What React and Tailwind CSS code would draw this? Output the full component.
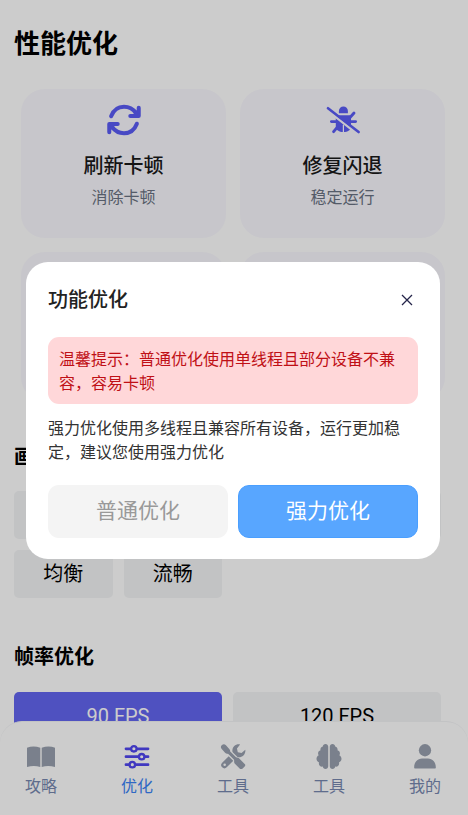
import React from "react";
import { FaBolt, FaBrain, FaGaugeHigh } from "react-icons/fa6";

const FONT = "font-[Roboto,'Noto_Sans_CJK_SC',sans-serif]";

function RefreshIcon({ className }) {
  const half = (
    <>
      <path d="M4 11.4C6.2 5.6 10.600 2.200 16.500 2.200c4.600 0 8.800 2.200 11.600 6" fill="none" />
      <path d="M30.800 3.200v8h-8.200" fill="none" />
      <path d="M30 4 24 11h6z" fill="currentColor" stroke="none" />
    </>
  );
  return (
    <svg
      viewBox="0 0 33 30"
      className={className}
      stroke="currentColor"
      strokeWidth="3.900"
      strokeLinecap="round"
      strokeLinejoin="round"
    >
      {half}
      <g transform="rotate(180 16.5 15)">{half}</g>
    </svg>
  );
}

function BugSlashIcon({ className }) {
  return (
    <svg viewBox="0 0 34 30" className={className} fill="currentColor" stroke="none" strokeLinecap="round">
      <path d="M12.9 8.2V6a4.5 4.5 0 0 1 9 0v2.2z" />
      <path d="M11 10.200h13l1 2.600v9.400c0 2.600-3.200 4.800-7.600 4.800s-7.600-2.200-7.600-4.800v-9.400z" />
      <g stroke="currentColor" strokeWidth="2.900">
        <path d="M24 12.400 28 8M25 16.600h4.600M10 16.600H5.400M11 22.600 7.600 26.600" />
      </g>
      <path d="M17.400 20v7" stroke="#f9f8fe" strokeWidth="1.200" />
      <path d="M1.200 5.200 30.600 28.200" stroke="#f9f8fe" strokeWidth="2.400" />
      <path d="M2 3.200 32.600 27" stroke="currentColor" strokeWidth="2.600" />
    </svg>
  );
}

function BookIcon({ className }) {
  return (
    <svg viewBox="0 0 28 24" className={className} fill="currentColor">
      <path d="M0 3.200C4 1.600 9 1.600 13.300 3.200v19.400C9 21 4.600 21 0 22.600z" />
      <path d="M14.700 3.200C19 1.600 24 1.600 28 3.200v19.400c-4.600-1.600-9-1.600-13.300 0z" />
    </svg>
  );
}

function SlidersIcon({ className }) {
  return (
    <svg viewBox="0 0 24 24" className={className} stroke="currentColor" strokeWidth="2.600" strokeLinecap="round" fill="white">
      <path d="M1.400 4.600h21.200M1.400 12.200h21.200M1.400 19.800h21.200" />
      <circle cx="9" cy="4.600" r="2.600" strokeWidth="2.200" />
      <circle cx="16.500" cy="12.200" r="2.600" strokeWidth="2.200" />
      <circle cx="7.500" cy="19.800" r="2.600" strokeWidth="2.200" />
    </svg>
  );
}

function ToolsIcon({ className }) {
  return (
    <svg viewBox="0 0 24 24" className={className} fill="none" stroke="currentColor">
      <path d="M13 11 3.800 20.200" strokeWidth="6.200" strokeLinecap="round" />
      <path
        d="M18.800.400c-4-.8-7.800 2.200-7.400 6.800.2 3.400 3 5.800 6.200 5.600 3.800-.2 6.800-3.400 6.200-7.400l-3.600 3.200-3.600-.8-.8-3.600z"
        fill="currentColor"
        stroke="none"
      />
      <path d="M5 5 17 17" stroke="white" strokeWidth="5.400" />
      <path d="M3.200 3 6.400 6.600" strokeWidth="5.400" strokeLinecap="round" />
      <path d="M6.400 6.400 16 16" strokeWidth="3" />
      <path
        d="M13.200 14.800c0-1 .8-1.800 1.800-1.800 1.200 0 2.200.2 3 1l5.200 5.200c.8.8.8 1.600 0 2.400l-2.200 2.200c-.8.8-1.600.8-2.400 0l-5-5.200c-.6-.6-.6-2.600-.4-3.800z"
        fill="currentColor"
        stroke="none"
      />
      <circle cx="4" cy="20" r="1.200" fill="white" stroke="none" />
    </svg>
  );
}

function UserIcon({ className }) {
  return (
    <svg viewBox="0 0 24 24" className={className} fill="currentColor">
      <circle cx="12" cy="6" r="5.900" />
      <path d="M1.600 22.600c0-5 3.200-8.600 7.600-8.600h5.600c4.400 0 7.600 3.600 7.600 8.600 0 .6-.4 1-1 1H2.600c-.6 0-1-.4-1-1z" />
    </svg>
  );
}

const features = [
  { title: "刷新卡顿", note: "消除卡顿", Icon: RefreshIcon },
  { title: "修复闪退", note: "稳定运行", Icon: BugSlashIcon },
  { title: "", note: "", Icon: FaBolt },
  { title: "", note: "", Icon: FaGaugeHigh },
];

const qualities = ["", "", "", "", "均衡", "流畅"];

const tabs = [
  { label: "攻略", Icon: BookIcon },
  { label: "优化", Icon: SlidersIcon, active: true },
  { label: "工具", Icon: ToolsIcon },
  { label: "工具", Icon: FaBrain },
  { label: "我的", Icon: UserIcon },
];

function FeatureCard({ title, note, Icon }) {
  return (
    <button
      type="button"
      className="flex h-[149px] flex-col items-center rounded-[24px] bg-[#f9f8fe] pt-[15px]"
    >
      <Icon className="h-8 w-[34px] text-[#5b5cf6]" />
      <span className="mt-4 text-[20px] leading-7 font-medium text-[#1a1a1a]">{title}</span>
      <span className="mt-[6px] text-base leading-6 text-gray-500">{note}</span>
    </button>
  );
}

function Dialog() {
  return (
    <div className="fixed inset-0 z-20 flex items-center justify-center bg-black/20 pt-1.5 pr-7 pl-[26px]">
      <section
        role="dialog"
        aria-labelledby="dialog-title"
        className="w-full rounded-[22px] bg-white px-[22px] pt-[23px] pb-[21px]"
      >
        <header className="flex items-center justify-between">
          <h2 id="dialog-title" className="text-[20px] leading-[30px] font-medium text-[#222]">
            功能优化
          </h2>
          <button type="button" aria-label="关闭" className="flex size-[22px] items-center justify-center">
            <svg viewBox="0 0 12 12" className="size-3 stroke-[#25254a]" fill="none" strokeWidth="1.3">
              <path d="M1 1 11 11M11 1 1 11" />
            </svg>
          </button>
        </header>
        <p className="mt-[22px] rounded-[11px] bg-[#ffd7d9] px-[11px] pt-[11px] pb-2 text-base leading-6 text-[#c01016]">
          温馨提示：普通优化使用单线程且部分设备不兼容，容易卡顿
        </p>
        <p className="mt-[13px] text-base leading-6 text-[#333]">
          强力优化使用多线程且兼容所有设备，运行更加稳定，建议您使用强力优化
        </p>
        <div className="mt-5 grid grid-cols-2 gap-[10px]">
          <button type="button" className="h-[53px] rounded-[11px] bg-[#f4f4f4] text-[21px] text-[#999]">
            普通优化
          </button>
          <button
            type="button"
            className="h-[53px] rounded-[11px] border border-[#4a9fff] bg-[#58a6ff] text-[21px] text-white"
          >
            强力优化
          </button>
        </div>
      </section>
    </div>
  );
}

export default function App() {
  return (
    <div className={`min-h-screen bg-white text-black ${FONT}`}>
      <main className="pt-6 pr-[27px] pb-16 pl-[14px]">
        <h1 className="text-[26px] leading-10 font-bold">性能优化</h1>
        <div className="mt-[25px] -mr-1 ml-[7px] grid grid-cols-2 gap-[14px]">
          {features.map((f, i) => (
            <FeatureCard key={i} {...f} />
          ))}
        </div>

        <h2 className="mt-[41px] text-[20px] leading-[30px] font-bold">画质优化</h2>
        <div className="mt-[19px] grid grid-cols-4 gap-x-[11px] gap-y-[11px]">
          {qualities.map((q, i) => (
            <button key={i} type="button" className="h-12 rounded-[5px] bg-gray-100 text-[20px]">
              {q}
            </button>
          ))}
        </div>

        <h2 className="mt-[44px] text-[20px] leading-[30px] font-bold">帧率优化</h2>
        <div className="mt-5 grid grid-cols-2 gap-[11px]">
          <button type="button" className="h-12 rounded-[5px] bg-[#6366f1] text-[20px] text-white">
            90 FPS
          </button>
          <button type="button" className="h-12 rounded-[5px] bg-gray-100 text-[20px]">
            120 FPS
          </button>
        </div>
      </main>

      <nav className="fixed inset-x-0 bottom-0 z-10 flex h-[94px] justify-between rounded-t-[22px] border-t border-gray-100 bg-white pt-[22px] pr-[27px] pl-[25px]">
        {tabs.map(({ label, Icon, active }, i) => (
          <a key={i} href="#" className="flex w-8 flex-col items-center gap-[6px]">
            <Icon className={active ? "h-[25px] w-7 text-[#5046f0]" : "h-[25px] w-7 text-gray-400"} />
            <span
              className={
                active
                  ? "text-base leading-6 whitespace-nowrap text-[#3b82f6]"
                  : "text-base leading-6 whitespace-nowrap text-[#7788b0]"
              }
            >
              {label}
            </span>
          </a>
        ))}
      </nav>

      <Dialog />
    </div>
  );
}
